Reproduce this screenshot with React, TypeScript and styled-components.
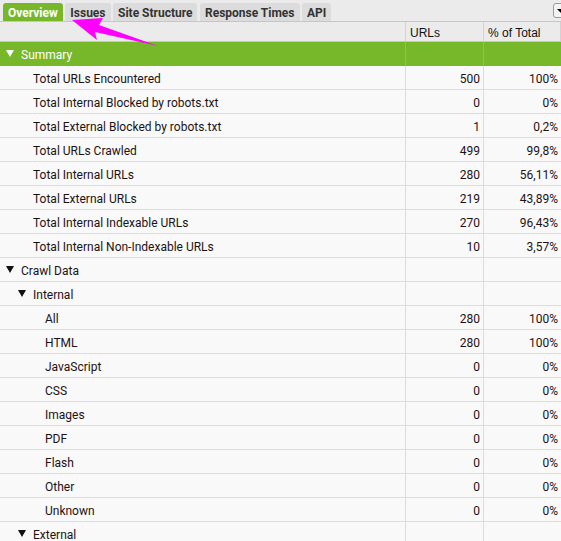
import styled, { createGlobalStyle } from 'styled-components';

type RowData = {
	label: string;
	level: number;
	group?: boolean;
	urls?: number;
	pct?: string;
};

const rows: RowData[] = [
	{ label: 'Total URLs Encountered', level: 1, urls: 500, pct: '100%' },
	{ label: 'Total Internal Blocked by robots.txt', level: 1, urls: 0, pct: '0%' },
	{ label: 'Total External Blocked by robots.txt', level: 1, urls: 1, pct: '0,2%' },
	{ label: 'Total URLs Crawled', level: 1, urls: 499, pct: '99,8%' },
	{ label: 'Total Internal URLs', level: 1, urls: 280, pct: '56,11%' },
	{ label: 'Total External URLs', level: 1, urls: 219, pct: '43,89%' },
	{ label: 'Total Internal Indexable URLs', level: 1, urls: 270, pct: '96,43%' },
	{ label: 'Total Internal Non-Indexable URLs', level: 1, urls: 10, pct: '3,57%' },
	{ label: 'Crawl Data', level: 0, group: true },
	{ label: 'Internal', level: 1, group: true },
	{ label: 'All', level: 2, urls: 280, pct: '100%' },
	{ label: 'HTML', level: 2, urls: 280, pct: '100%' },
	{ label: 'JavaScript', level: 2, urls: 0, pct: '0%' },
	{ label: 'CSS', level: 2, urls: 0, pct: '0%' },
	{ label: 'Images', level: 2, urls: 0, pct: '0%' },
	{ label: 'PDF', level: 2, urls: 0, pct: '0%' },
	{ label: 'Flash', level: 2, urls: 0, pct: '0%' },
	{ label: 'Other', level: 2, urls: 0, pct: '0%' },
	{ label: 'Unknown', level: 2, urls: 0, pct: '0%' },
	{ label: 'External', level: 1, group: true },
];

const tabs = ['Overview', 'Issues', 'Site Structure', 'Response Times', 'API'];

const GlobalStyle = createGlobalStyle`
	html, body {
		margin: 0;
		padding: 0;
		background: #f9f9f9;
		overflow: hidden;
	}
	body {
		font-family: Roboto, "Liberation Sans", sans-serif;
	}
`;

const Page = styled.div`
	position: relative;
	width: 561px;
	height: 541px;
	overflow: hidden;
	background: #f9f9f9;
`;

const TabBar = styled.div`
	height: 22px;
	box-sizing: border-box;
	display: flex;
	align-items: flex-end;
	gap: 2.5px;
	padding-left: 3px;
	background: #ebebeb;
	border-bottom: 1px solid #c6c6c6;
	position: relative;
`;

const Tab = styled.div<{ $active?: boolean }>`
	height: 18px;
	box-sizing: border-box;
	padding: 1px 5px 0;
	display: flex;
	align-items: center;
	font-family: Roboto, "Liberation Sans", sans-serif;
	font-weight: 700;
	font-size: 12px;
	border-radius: 3px 3px 0 0;
	color: ${({ $active }) => ($active ? '#ffffff' : '#333333')};
	background: ${({ $active }) => ($active ? '#76b82a' : '#dcdcdc')};
`;

const MenuButton = styled.div`
	position: absolute;
	right: -8px;
	top: 3px;
	width: 16px;
	height: 15px;
	box-sizing: border-box;
	border: 1px solid #9a9a9a;
	border-radius: 3px;
	background: #f4f4f4;
	display: flex;
	align-items: center;
	padding-left: 3px;
	&::after {
		content: '';
		border-left: 4px solid transparent;
		border-right: 4px solid transparent;
		border-top: 4px solid #000;
	}
`;

const Grid = styled.div`
	display: grid;
	grid-template-columns: 406px 78px 1fr;
`;

const HeaderCell = styled.div`
	height: 20px;
	box-sizing: border-box;
	display: flex;
	align-items: center;
	padding: 2px 0 0 4px;
	background: #ebebeb;
	border-bottom: 1px solid #c6c6c6;
	border-right: 1px solid #d2d2d2;
	font-family: "Liberation Sans", Arial, sans-serif;
	font-size: 12px;
	color: #111;
	&:last-child {
		border-right: none;
	}
`;

const Cell = styled.div<{ $section?: boolean; $align?: 'left' | 'right'; $indent?: number }>`
	height: 24px;
	box-sizing: border-box;
	display: flex;
	align-items: center;
	padding-top: 2px;
	justify-content: ${({ $align }) => ($align === 'right' ? 'flex-end' : 'flex-start')};
	padding-left: ${({ $indent }) => $indent ?? 0}px;
	padding-right: ${({ $align }) => ($align === 'right' ? '3px' : '0')};
	font-size: 12px;
	color: ${({ $section }) => ($section ? '#ffffff' : '#1c1214')};
	background: ${({ $section }) => ($section ? '#76b82a' : '#f9f9f9')};
	border-bottom: 1px solid ${({ $section }) => ($section ? '#76b82a' : '#dcdcdc')};
	border-right: 1px solid ${({ $section }) => ($section ? '#8cc450' : '#dcdcdc')};
	&:nth-child(3n) {
		border-right: none;
	}
`;

const Toggle = styled.span<{ $light?: boolean }>`
	display: inline-block;
	width: 0;
	height: 0;
	margin-right: 7px;
	margin-top: -2px;
	border-left: 4px solid transparent;
	border-right: 4px solid transparent;
	border-top: 7px solid ${({ $light }) => ($light ? '#ffffff' : '#111111')};
`;

const Arrow = styled.svg`
	position: absolute;
	left: 0;
	top: 0;
	pointer-events: none;
`;

const indentFor = (level: number, group?: boolean) => (group ? 6 + level * 12 : 21 + level * 12);

function App() {
	return (
		<Page>
			<GlobalStyle />
			<TabBar>
				{tabs.map((t, i) => (
					<Tab key={t} $active={i === 0}>
						{t}
					</Tab>
				))}
				<MenuButton />
			</TabBar>
			<Grid>
				<HeaderCell />
				<HeaderCell>URLs</HeaderCell>
				<HeaderCell>% of Total</HeaderCell>

				<Cell $section $indent={6}>
					<Toggle $light />
					Summary
				</Cell>
				<Cell $section />
				<Cell $section />

				{rows.map((r) => [
					<Cell key={r.label + 'a'} $indent={indentFor(r.level, r.group)}>
						{r.group && <Toggle />}
						{r.label}
					</Cell>,
					<Cell key={r.label + 'b'} $align="right">
						{r.urls}
					</Cell>,
					<Cell key={r.label + 'c'} $align="right">
						{r.pct}
					</Cell>,
				])}
			</Grid>
			<Arrow width="561" height="60" viewBox="0 0 561 60">
				<polygon points="72,20 103,18 99,25 158,46 95,32 97,40" fill="#ff00ff" />
			</Arrow>
		</Page>
	);
}

export default App;
